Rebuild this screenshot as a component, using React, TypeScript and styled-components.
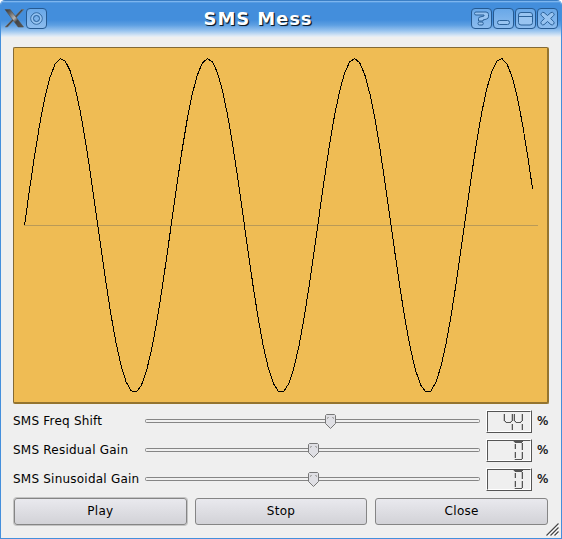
import React from 'react';
import styled, { createGlobalStyle, css } from 'styled-components';

const GlobalStyle = createGlobalStyle`
  body { margin: 0; background: #fff; }
  * { box-sizing: border-box; }
`;

const Window = styled.div`
  width: 562px;
  height: 539px;
  display: flex;
  flex-direction: column;
  position: relative;
  overflow: hidden;
  border: 1px solid #448fdc;
  border-top: 0;
  border-radius: 5px 5px 0 0;
  background: #efefef;
  color: #000;
  font: 12px/15px 'DejaVu Sans', sans-serif;
`;

const TitleBar = styled.header`
  height: 37px;
  flex: none;
  display: flex;
  align-items: flex-start;
  padding: 8px 3px 0 3px;
  background: linear-gradient(#3b7fc6 0 1px, #7db5ee 1px 2px, #559be2 2px 3px, #438edc 3px 20px, #5d9fe2 25px, #9bc5ef 31px, #dfeaf5 36px, #e9eef3 37px);
`;

const Title = styled.h1`
  flex: 1;
  margin: 0;
  padding-right: 2px;
  text-align: center;
  font: bold 18px/21px 'DejaVu Sans', sans-serif;
  letter-spacing: 0.9px;
  color: #fff;
  text-shadow: 1px 1px 0 #0c1c2c, 1px 1px 1px #123;
`;

const Tools = styled.div`
  display: flex;
  gap: 1px;
  svg { display: block; }
`;

const ToolButton = styled.button`
  width: 21px;
  height: 21px;
  padding: 0;
  border: 1px solid #265a91;
  border-radius: 4px;
  background: linear-gradient(#69a8e8, #8cbcee);
`;

const Content = styled.main`
  flex: 1;
  display: flex;
  flex-direction: column;
  padding: 10px 12px 0;
`;

const Plot = styled.div`
  width: 536px;
  height: 357px;
  flex: none;
  margin-bottom: 3px;
  border: 1px solid #836a37;
  border-right: 2px solid #94742f;
  border-bottom: 2px solid #94742f;
  border-radius: 2px;
  background: #efbc54;
  svg { display: block; }
`;

const Row = styled.div`
  display: grid;
  grid-template-columns: 132px 335px 6px 46px 5px 1fr;
  align-items: center;
  height: 29px;
`;

const Label = styled.label`
  white-space: nowrap;
  letter-spacing: 0.22px;
`;

const Track = styled.div`
  display: flex;
  align-items: center;
  height: 15px;
  svg { display: block; }
`;

const Lcd = styled.div`
  grid-column: 4;
  height: 23px;
  border: 1px solid;
  border-color: #fff #555 #555 #fff;
  svg {
    display: block;
    border: 1px solid;
    border-color: #555 #fff #fff #555;
  }
`;

const Percent = styled.span`
  grid-column: 6;
  -webkit-text-stroke: 0.2px #000;
`;

const Buttons = styled.div`
  display: flex;
  gap: 8px;
  margin-top: 4px;
  padding: 0 1px;
`;

const PushButton = styled.button<{ $default?: boolean }>`
  flex: 1;
  height: 27px;
  padding: 0;
  border: 1px solid #858585;
  border-radius: 3px;
  background: linear-gradient(#e9e9ee, #d2d2d7);
  font: inherit;
  letter-spacing: 0.3px;
  color: #000;
  ${p => p.$default && css`box-shadow: 0 0 0 1px #c4c4c4;`}
`;

const Grip = styled.svg`
  position: absolute;
  right: 2px;
  bottom: 2px;
`;

const wave = Array.from({ length: 101 }, (_, i) => {
  const x = i * 5.08;
  return `${(10.5 + x).toFixed(2)},${(177.5 - 167 * Math.sin((x / 146.63) * 2 * Math.PI)).toFixed(2)}`;
}).join(' ');

const Slider = ({ at }: { at: number }) => (
  <Track>
    <svg width="335" height="15" fill="none">
      <rect x=".5" y="5.5" width="334" height="3" rx="1" fill="#f0f0f0" stroke="#858585" />
      <path d={`M${at + 1.5} .5h8l1 1v8l-5 5-5-5v-8z`} fill="#dfdfe4" stroke="#777" />
      <path d={`M${at + 2.5} 5v-1.5h1.5M${at + 7} 3.5h1.5v1.5`} stroke="#aaa" />
    </svg>
  </Track>
);

const digitPaths: Record<string, string> = {
  '4': 'M.5 2v7M1.5 9v1M2 10.5h5M7.5 9v1M8.5 2v7M8.5 12v6',
  '0': 'M0 .5h9M1 1.5h7M1.5 3v5M8.5 2v7M1.5 11v6M8.5 11v7M1 18.5h7',
};

const Display = ({ value }: { value: string }) => (
  <Lcd>
    <svg width="44" height="21" shapeRendering="crispEdges">
      {value.split('').map((digit, i) => {
        const x = 26 - (value.length - 1 - i) * 10;
        return (
          <g key={i} fill="none">
            <path d={digitPaths[digit]} stroke="#c4c4c4" transform={`translate(${x - 1} 0)`} />
            <path d={digitPaths[digit]} stroke="#555" transform={`translate(${x} 0)`} />
          </g>
        );
      })}
    </svg>
  </Lcd>
);

const glyphs = {
  sticky: (
    <g fill="none" stroke="#2b6198">
      <circle cx="9.5" cy="9.5" r="5.7" />
      <circle cx="9.5" cy="9.5" r="4.6" stroke="#a9d0f6" />
      <circle cx="9.5" cy="9.5" r="3" />
    </g>
  ),
  help: (
    <path d="M4 3h10q2.500 0 2.500 2.500v2.200q0 2-2.300 2.500l-3.200.8v1H6.500V9.500Q6.500 8.200 8 8l4-1V6H4q-1.500 0-1.500-1.500T4 3zM7.500 13h2.500q1.300 0 1.300 1.500T10 16H7.500Q6 16 6 14.500T7.500 13z" />
  ),
  minimize: <rect x="3.500" y="11.500" width="12" height="4" rx="2" />,
  maximize: (
    <g>
      <rect x="2.500" y="3.500" width="14" height="12.500" rx="2.500" />
      <path d="M3 7.500h13" />
    </g>
  ),
  close: (
    <path d="M3.200 4.500Q4.200 2.800 6 3.500l3.500 3 3.500-3q1.800-.7 2.800 1t-.3 2.200L12.600 9.500l2.900 2.900q1.200 1.200.2 2.600t-2.700.7l-3.500-3.200L6 15.700q-1.700.7-2.700-.7t.2-2.600l2.900-2.900-2.900-2.800q-1.100-.9-.3-2.200z" />
  ),
};

const TitleButton = ({ glyph, label }: { glyph: keyof typeof glyphs; label: string }) => (
  <ToolButton aria-label={label}>
    <svg width="19" height="19" fill="#98c4f1" stroke="#2b6198">
      {glyphs[glyph]}
    </svg>
  </ToolButton>
);

const XLogo = () => (
  <svg width="21" height="21">
    <defs>
      <linearGradient id="steel" x1="0" y1="0" x2="1" y2="1">
        <stop offset="0" stopColor="#333" />
        <stop offset=".25" stopColor="#666" />
        <stop offset=".5" stopColor="#b5b5b5" />
        <stop offset=".65" stopColor="#444" />
        <stop offset="1" stopColor="#555" />
      </linearGradient>
    </defs>
    <path d="M17.500 1.500h2.200L3.500 19H1.200z" fill="#444" stroke="#79736b" strokeWidth=".7" />
    <path d="M1 1.500h5.200L19.500 19h-5.300z" fill="url(#steel)" stroke="#55504b" strokeWidth=".6" />
  </svg>
);

const channels = [
  { name: 'SMS Freq Shift', at: 180, value: '44' },
  { name: 'SMS Residual Gain', at: 163, value: '0' },
  { name: 'SMS Sinusoidal Gain', at: 163, value: '0' },
];

export default function App() {
  return (
    <>
      <GlobalStyle />
      <Window>
        <TitleBar>
          <Tools>
            <XLogo />
            <TitleButton glyph="sticky" label="On all desktops" />
          </Tools>
          <Title>SMS Mess</Title>
          <Tools>
            <TitleButton glyph="help" label="Help" />
            <TitleButton glyph="minimize" label="Minimize" />
            <TitleButton glyph="maximize" label="Maximize" />
            <TitleButton glyph="close" label="Close window" />
          </Tools>
        </TitleBar>
        <Content>
          <Plot>
            <svg width="533" height="354" fill="none" shapeRendering="crispEdges">
              <path d="M10 177.5h514" stroke="#b99a58" />
              <polyline points={wave} stroke="#000" />
            </svg>
          </Plot>
          {channels.map(c => (
            <Row key={c.name}>
              <Label>{c.name}</Label>
              <Slider at={c.at} />
              <Display value={c.value} />
              <Percent>%</Percent>
            </Row>
          ))}
          <Buttons>
            <PushButton $default>Play</PushButton>
            <PushButton>Stop</PushButton>
            <PushButton>Close</PushButton>
          </Buttons>
        </Content>
        <Grip width="13" height="13" fill="none">
          <path d="M2 13 13 2M6 13l7-7M10 13l3-3" stroke="#fff" />
          <path d="M.5 12.500l12-12M4.500 12.500l8-8M8.500 12.500l4-4" stroke="#444" strokeWidth="1.100" />
        </Grip>
      </Window>
    </>
  );
}
